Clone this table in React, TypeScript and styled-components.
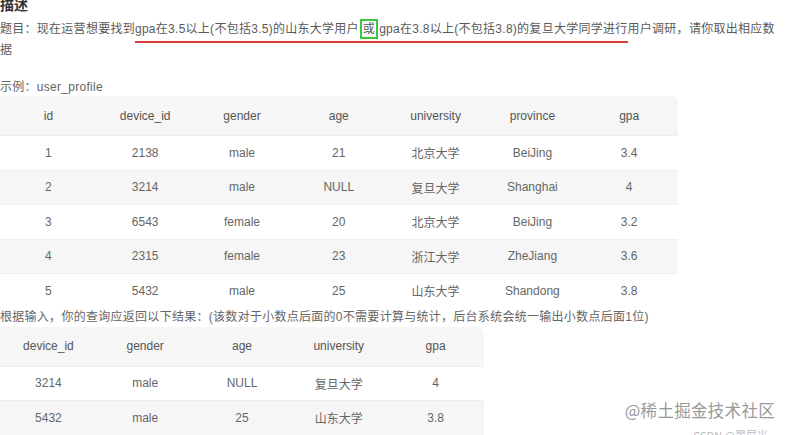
import React from "react";
import styled, { createGlobalStyle } from "styled-components";

const Global = createGlobalStyle`
  html, body { margin: 0; padding: 0; background: #ffffff; overflow: hidden; }
  body { font-family: "Liberation Sans", "Noto Sans CJK SC", sans-serif; }
`;

const Page = styled.div`
  position: relative;
  width: 790px;
  height: 435px;
  overflow: hidden;
  display: flex;
  flex-direction: column;
`;

const Title = styled.h3`
  margin: -3px 0 0 0;
  font-size: 14px;
  line-height: 16px;
  font-weight: 700;
  color: #333;
`;

const Para = styled.p`
  margin: 6px 0 0 0;
  width: 776px;
  font-size: 12px;
  line-height: 21px;
  letter-spacing: 0.27px;
  color: #5a5a5a;
`;

const Marked = styled.span`
  padding-bottom: 5px;
  border-bottom: 2px solid #dd3a3a;
`;

const Boxed = styled.span`
  display: inline-block;
  line-height: 14px;
  padding: 1px 1px;
  margin: 0 1px;
  border: 2px solid #3cc83c;
`;

const Label = styled.div<{ $top: number }>`
  margin-top: ${(p) => p.$top}px;
  font-size: 12px;
  line-height: 18px;
  letter-spacing: 0.28px;
  color: #666;
  white-space: nowrap;
`;

const Table = styled.div<{ $cols: number; $top: number }>`
  margin-top: ${(p) => p.$top}px;
  width: ${(p) => p.$cols * 96.8}px;
  display: flex;
  flex-direction: column;
  border-top-right-radius: 7px;
  overflow: hidden;
`;

const Row = styled.div<{ $cols: number; $kind: "head" | "even" | "odd" }>`
  display: grid;
  grid-template-columns: repeat(${(p) => p.$cols}, 1fr);
  height: ${(p) => (p.$kind === "head" ? 39 : 34.5)}px;
  align-items: center;
  background: ${(p) => (p.$kind === "odd" ? "#ffffff" : "#f6f6f6")};
  border-top: ${(p) => (p.$kind === "head" ? "none" : "1px solid #efefef")};
  box-sizing: border-box;
  color: ${(p) => (p.$kind === "head" ? "#555" : "#666")};
  font-size: 12px;
`;

const Cell = styled.div`
  text-align: center;
  white-space: nowrap;
`;

const Watermark = styled.div`
  position: absolute;
  right: 15px;
  top: 398px;
  font-size: 16.5px;
  color: #9a9a9a;
  font-family: "Noto Sans CJK SC", sans-serif;
  letter-spacing: 0.3px;
  text-shadow: 0 0 2px #fff;
`;

const SubMark = styled.div`
  position: absolute;
  right: 22px;
  top: 427px;
  font-size: 11px;
  color: #bbb;
  font-family: "Noto Sans CJK SC", sans-serif;
`;

const table1 = {
  head: ["id", "device_id", "gender", "age", "university", "province", "gpa"],
  rows: [
    ["1", "2138", "male", "21", "北京大学", "BeiJing", "3.4"],
    ["2", "3214", "male", "NULL", "复旦大学", "Shanghai", "4"],
    ["3", "6543", "female", "20", "北京大学", "BeiJing", "3.2"],
    ["4", "2315", "female", "23", "浙江大学", "ZheJiang", "3.6"],
    ["5", "5432", "male", "25", "山东大学", "Shandong", "3.8"],
  ],
};

const table2 = {
  head: ["device_id", "gender", "age", "university", "gpa"],
  rows: [
    ["3214", "male", "NULL", "复旦大学", "4"],
    ["5432", "male", "25", "山东大学", "3.8"],
  ],
};

function DataTable({ data, top }: { data: { head: string[]; rows: string[][] }; top: number }) {
  const n = data.head.length;
  return (
    <Table $cols={n} $top={top}>
      <Row $cols={n} $kind="head">
        {data.head.map((h) => (
          <Cell key={h}>{h}</Cell>
        ))}
      </Row>
      {data.rows.map((r, i) => (
        <Row key={i} $cols={n} $kind={i % 2 === 0 ? "odd" : "even"}>
          {r.map((c, j) => (
            <Cell key={j}>{c}</Cell>
          ))}
        </Row>
      ))}
    </Table>
  );
}

export default function App() {
  return (
    <Page>
      <Global />
      <Title>描述</Title>
      <Para>
        题目：现在运营想要找到
        <Marked>
          gpa在3.5以上(不包括3.5)的山东大学用户<Boxed>或</Boxed>gpa在3.8以上(不包括3.8)的复旦大学同学进行
        </Marked>
        用户调研，请你取出相应数据
      </Para>
      <Label $top={17}>示例：user_profile</Label>
      <DataTable data={table1} top={0} />
      <Label $top={0}>根据输入，你的查询应返回以下结果：(该数对于小数点后面的0不需要计算与统计，后台系统会统一输出小数点后面1位)</Label>
      <DataTable data={table2} top={1} />
      <Watermark>@稀土掘金技术社区</Watermark>
      <SubMark>CSDN @翠屏米</SubMark>
    </Page>
  );
}
